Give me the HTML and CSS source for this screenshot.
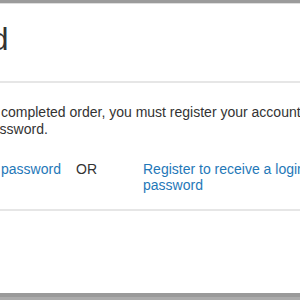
FILE: index.html
```html
<!DOCTYPE html>
<html>
<head>
<meta charset="utf-8">
<link rel="stylesheet" href="styles.css">
</head>
<body>
<div class="page">
  <div class="top-bar"></div>
  <header class="header">
    <h1 class="title">Password</h1>
  </header>
  <section class="body">
    <p class="intro">completed order, you must register your account with a password.</p>
    <div class="links">
      <a class="link" href="#">password</a>
      <span class="or">OR</span>
      <a class="link wide" href="#">Register to receive a login password</a>
    </div>
  </section>
  <div class="bottom-bar"></div>
</div>
</body>
</html>
```

FILE: styles.css
```css
html, body {
  margin: 0;
  padding: 0;
  overflow: hidden;
  background: #ffffff;
}

.page {
  width: 300px;
  height: 300px;
  display: flex;
  flex-direction: column;
  overflow: hidden;
  font-family: "Liberation Sans", Arial, sans-serif;
  color: #333333;
}

.top-bar {
  height: 3px;
  background: #9b9b9b;
  border-bottom: 1px solid #dedede;
  flex: none;
}

.header {
  height: 79px;
  border-bottom: 2px solid #e6e6e6;
  flex: none;
  box-sizing: border-box;
  padding-top: 16px;
}

.title {
  margin: 0 0 0 -132px;
  font-size: 32px;
  line-height: 38px;
  font-weight: normal;
  color: #333333;
  white-space: nowrap;
}

.body {
  border-bottom: 2px solid #e6e6e6;
  padding: 21px 0 16px;
  flex: none;
}

.intro {
  margin: 0 0 0 -16px;
  width: 370px;
  text-indent: 17px;
  font-size: 14px;
  line-height: 17px;
}

.links {
  display: grid;
  grid-template-columns: 75px 67px 180px;
  margin: 23px 0 0 1px;
  font-size: 14px;
  line-height: 16px;
}

.link {
  color: #1f78b8;
  text-decoration: none;
}

.or {
  color: #333333;
}

.bottom-bar {
  margin-top: auto;
  height: 4px;
  background: #9a9a9a;
  border-bottom: 3px solid #ababab;
  flex: none;
}
```
